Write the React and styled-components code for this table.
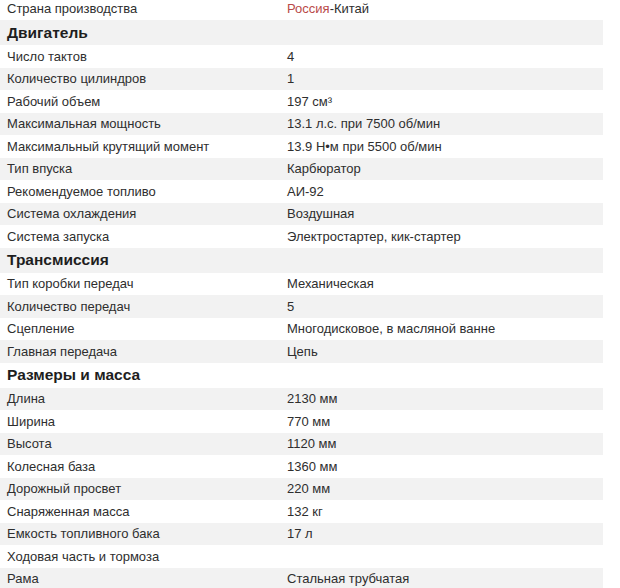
import React from "react";
import styled, { createGlobalStyle } from "styled-components";

const Global = createGlobalStyle`
  html, body { margin: 0; padding: 0; background: #fff; }
  body { font-family: "Liberation Sans", Arial, sans-serif; }
`;

const Table = styled.div`
  width: 603px;
  margin-top: -2.5px;
  display: flex;
  flex-direction: column;
  color: #2e2e2e;
  font-size: 13px;
`;

const Row = styled.div`
  display: grid;
  grid-template-columns: 280px 1fr;
  align-items: center;
  height: ${(p) => (p.$head ? "25px" : "22.5px")};
  background: ${(p) => (p.$alt ? "#f2f2f2" : "#fff")};
`;

const Label = styled.div`
  padding-left: 7px;
  white-space: nowrap;
`;

const Value = styled.div`
  padding-left: 7px;
  white-space: nowrap;
`;

const Head = styled.div`
  padding-left: 7px;
  font-weight: bold;
  font-size: 15.5px;
  color: #1e1e1e;
`;

const Red = styled.span`
  color: #b94a48;
`;

const rows = [
  ["Страна производства", <><Red>Россия</Red>-Китай</>],
  ["Двигатель"],
  ["Число тактов", "4"],
  ["Количество цилиндров", "1"],
  ["Рабочий объем", "197 см³"],
  ["Максимальная мощность", "13.1 л.с. при 7500 об/мин"],
  ["Максимальный крутящий момент", "13.9 Н•м при 5500 об/мин"],
  ["Тип впуска", "Карбюратор"],
  ["Рекомендуемое топливо", "АИ-92"],
  ["Система охлаждения", "Воздушная"],
  ["Система запуска", "Электростартер, кик-стартер"],
  ["Трансмиссия"],
  ["Тип коробки передач", "Механическая"],
  ["Количество передач", "5"],
  ["Сцепление", "Многодисковое, в масляной ванне"],
  ["Главная передача", "Цепь"],
  ["Размеры и масса"],
  ["Длина", "2130 мм"],
  ["Ширина", "770 мм"],
  ["Высота", "1120 мм"],
  ["Колесная база", "1360 мм"],
  ["Дорожный просвет", "220 мм"],
  ["Снаряженная масса", "132 кг"],
  ["Емкость топливного бака", "17 л"],
  ["Ходовая часть и тормоза", ""],
  ["Рама", "Стальная трубчатая"],
];

export default function App() {
  return (
    <>
      <Global />
      <Table>
        {rows.map((r, i) =>
          r.length === 1 ? (
            <Row key={i} $head $alt={i % 2 === 1}>
              <Head>{r[0]}</Head>
            </Row>
          ) : (
            <Row key={i} $alt={i % 2 === 1}>
              <Label>{r[0]}</Label>
              <Value>{r[1]}</Value>
            </Row>
          )
        )}
      </Table>
    </>
  );
}
